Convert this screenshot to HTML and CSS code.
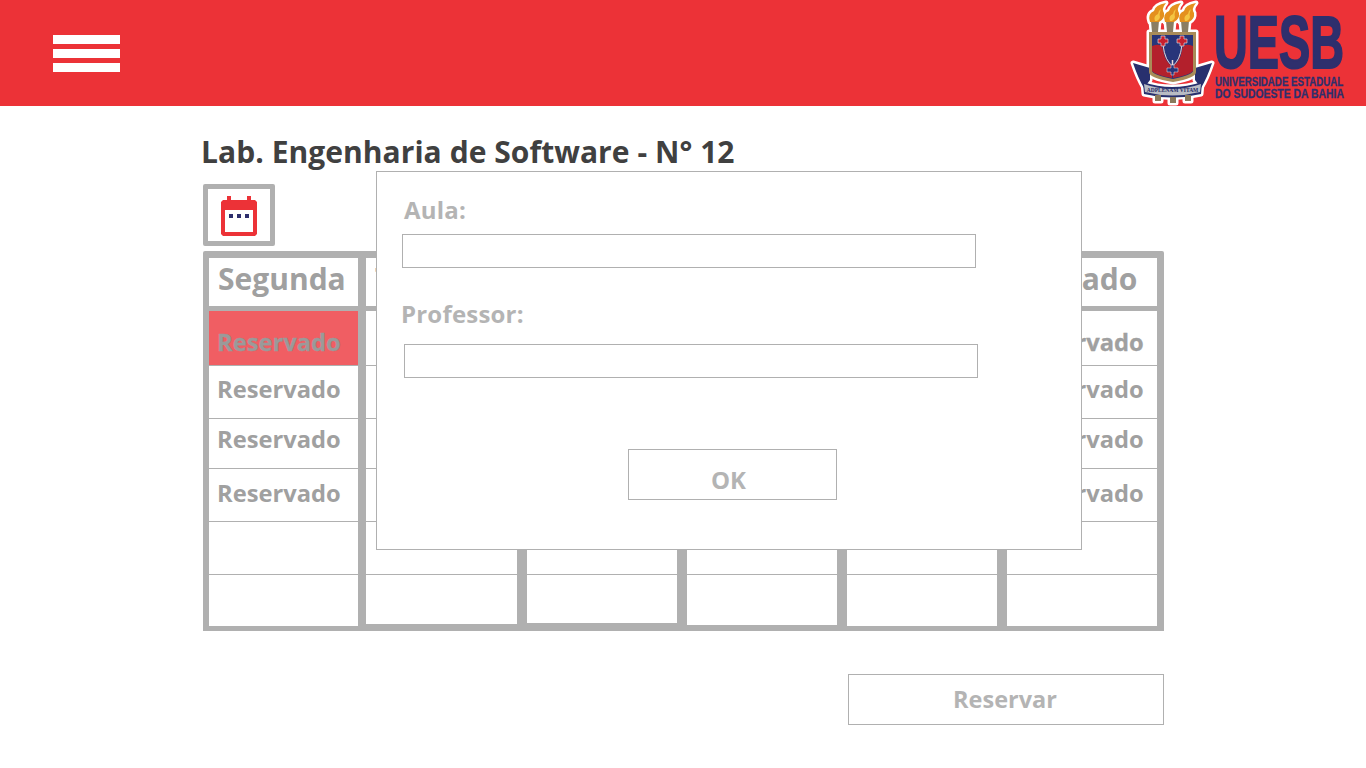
FILE: index.html
```html
<!DOCTYPE html>
<html lang="pt-BR">
<head>
<meta charset="utf-8">
<title>Lab. Engenharia de Software</title>
<link rel="stylesheet" href="styles.css">
</head>
<body>
  <header class="topbar">
    <button class="menu" aria-label="Menu"><span></span><span></span><span></span></button>
    <svg class="logo" viewBox="0 0 216 106" aria-label="UESB">
      <defs>
        <g id="crest">
          <path d="M3 63L20 68V80L14 88Q8 78 3 63ZM82 63L65 68V80L71 88Q77 78 82 63Z" fill="#28306e"/>
          <path d="M13 82Q42 92 72 82L71 94Q42 101 14 94Z" fill="#28306e"/>
          <path d="M25 95h6v6h-6zM40 97h6v6h-6zM55 95h6v6h-6z" fill="#8a7a5c"/>
          <path d="M19 32H66V72Q66 78 43 82Q19 78 19 72Z" fill="#a98c58"/>
          <path d="M21 21h8l-1 11h-6zM36 21h8l-1 11h-6zM51 21h8l-1 11h-6z" fill="#8b7d62"/>
          <path d="M20 22Q17 14 24 11Q25 5 36 3Q31 9 34 13Q35 19 29 22ZM35 22Q32 14 39 11Q40 5 51 3Q46 9 49 13Q50 19 44 22ZM50 22Q47 14 54 11Q55 5 66 3Q61 9 64 13Q65 19 59 22Z" fill="#e4901e"/>
        </g>
      </defs>
      <use href="#crest" stroke="#fff" stroke-width="5" stroke-linejoin="round"/>
      <use href="#crest"/>
      <path d="M25 21Q23 16 28 14Q28 11 31 9Q29 14 30 17Q30 19 27 21ZM40 21Q38 16 43 14Q43 11 46 9Q44 14 45 17Q45 19 42 21ZM55 21Q53 16 58 14Q58 11 61 9Q59 14 60 17Q60 19 57 21Z" fill="#f4c542"/>
      <path d="M22 35H63V71Q62 75 43 79Q23 75 22 71Z" fill="#27357a"/>
      <path d="M22 46Q32 42 33 50Q35 62 42 66V78Q25 75 22 71ZM63 46Q53 42 52 50Q50 62 43 66V78Q60 75 63 71Z" fill="#b3202c"/>
      <path d="M33 45Q35 61 42.500 66Q50 61 52 45" fill="none" stroke="#e9d9d9" stroke-width="1"/>
      <path d="M42.500 60V68" stroke="#e9d9d9" stroke-width="1.500"/>
      <path d="M28 39h3v-3h4v3h3v4h-3v3h-4v-3h-3zM47 39h3v-3h4v3h3v4h-3v3h-4v-3h-3z" fill="#c5202e" stroke="#eee" stroke-width=".6"/>
      <path d="M37 68h4v-3h3v3h4v4h-4v3h-3v-3h-4z" fill="#27357a" stroke="#eee" stroke-width=".5"/>
      <path d="M14 84Q42 94 71 84L70 92Q42 99 15 92Z" fill="#b9bcc4"/>
      <text class="logo-motto" transform="translate(42.500 92) scale(.92 1)" text-anchor="middle">ADPLENAM VITAM</text>
      <text class="logo-name" transform="translate(84 68) scale(.624 1)">UESB</text>
      <text class="logo-sub" transform="translate(85 86) scale(.81 1)">UNIVERSIDADE ESTADUAL</text>
      <text class="logo-sub" transform="translate(85 98) scale(.866 1)">DO SUDOESTE DA BAHIA</text>
    </svg>
  </header>

  <main class="page">
    <h1 class="title">Lab. Engenharia de Software - N° 12</h1>
    <button class="cal-btn" aria-label="Calendário">
      <svg width="36" height="40" viewBox="0 0 36 40">
        <path d="M6 0h4v4h16v-4h4v4h4l2 2v32l-2 2H2l-2-2V6l2-2h4z" fill="#ec3237"/>
        <rect x="4" y="14" width="28" height="22" fill="#fff"/>
        <path d="M8 18h4v4H8zM16 18h4v4h-4zM24 18h4v4h-4z" fill="#2e2f6d"/>
      </svg>
    </button>

    <div class="grade">
      <section class="dia dia-seg">
        <div class="dia-nome">Segunda</div>
        <div class="slot slot-ativo">Reservado</div>
        <div class="slot">Reservado</div>
        <div class="slot">Reservado</div>
        <div class="slot">Reservado</div>
        <div class="slot"></div>
        <div class="slot"></div>
      </section>
      <section class="dia dia-ter">
        <div class="dia-nome">Terça</div>
        <div class="slot"></div><div class="slot"></div><div class="slot"></div>
        <div class="slot"></div><div class="slot"></div><div class="slot"></div>
      </section>
      <section class="dia dia-qua">
        <div class="dia-nome">Quarta</div>
        <div class="slot"></div><div class="slot"></div><div class="slot"></div>
        <div class="slot"></div><div class="slot"></div><div class="slot"></div>
      </section>
      <section class="dia dia-qui">
        <div class="dia-nome">Quinta</div>
        <div class="slot"></div><div class="slot"></div><div class="slot"></div>
        <div class="slot"></div><div class="slot"></div><div class="slot"></div>
      </section>
      <section class="dia dia-sex">
        <div class="dia-nome">Sexta</div>
        <div class="slot"></div><div class="slot"></div><div class="slot"></div>
        <div class="slot"></div><div class="slot"></div><div class="slot"></div>
      </section>
      <section class="dia dia-sab">
        <div class="dia-nome">Sábado</div>
        <div class="slot slot-dobrado">Reservado</div>
        <div class="slot">Reservado</div>
        <div class="slot">Reservado</div>
        <div class="slot">Reservado</div>
        <div class="slot"></div>
        <div class="slot"></div>
      </section>
    </div>

    <div class="acoes">
      <button class="btn btn-reservar">Reservar</button>
    </div>
  </main>

  <form class="modal">
    <label class="campo-label label-aula" for="aula">Aula:</label>
    <input class="campo campo-aula" id="aula" type="text">
    <label class="campo-label label-prof" for="prof">Professor:</label>
    <input class="campo campo-prof" id="prof" type="text">
    <button class="btn btn-ok" type="button">OK</button>
  </form>
</body>
</html>
```

FILE: styles.css
```css
* {
  box-sizing: border-box;
}
body {
  margin: 0;
  background: #fff;
  font-family: "Open Sans", "Noto Sans", sans-serif;
  font-weight: 700;
}
button, input {
  font-family: inherit;
  font-weight: inherit;
}

.topbar {
  height: 106px;
  background: #ec3237;
  display: flex;
  align-items: flex-start;
  justify-content: space-between;
  padding-left: 53px;
  padding-right: 20px;
}
.menu {
  width: 67px;
  margin-top: 35px;
  padding: 0;
  border: 0;
  background: none;
  display: flex;
  flex-direction: column;
  gap: 5px;
}
.menu span {
  display: block;
  height: 9px;
  background: #fff;
}
.logo {
  width: 216px;
  height: 106px;
}
.logo-name {
  font-family: "Liberation Sans", sans-serif;
  font-size: 75px;
  font-weight: 700;
  fill: #2e2f6d;
  stroke: #2e2f6d;
  stroke-width: 2px;
}
.logo-sub {
  font-family: "Liberation Sans", sans-serif;
  font-size: 12px;
  font-weight: 700;
  fill: #2e2f6d;
  stroke: #2e2f6d;
  stroke-width: .3px;
}
.logo-motto {
  font-family: "Liberation Serif", serif;
  font-size: 6px;
  font-weight: 700;
  fill: #1f2a66;
}

.page {
  padding-left: 203px;
  width: 1164px;
}
.title {
  margin: 24px 0 0 -2px;
  height: 54px;
  font-size: 30px;
  line-height: 44px;
  letter-spacing: .05px;
  color: #404040;
  font-weight: 700;
}
.cal-btn {
  display: flex;
  align-items: flex-start;
  justify-content: center;
  width: 72px;
  height: 62px;
  padding: 7px 0 0;
  border: 5px solid #b0b0b0;
  border-radius: 2px;
  background: #fff;
}

.grade {
  margin-top: 5px;
  height: 380px;
  display: flex;
  background: #b0b0b0;
  padding: 7px 7px 0 6px;
  border-radius: 2px 2px 0 0;
}
.dia {
  width: 150px;
  margin-left: 10px;
  display: grid;
  grid-template-rows: 48px 60px 53px 50px 53px 53px 1fr;
}
.dia-seg { width: 149px; margin-left: 0; height: 368px; }
.dia-ter { width: 151px; margin-left: 8px; height: 366px; }
.dia-qua { height: 365px; }
.dia-qui { height: 367px; }
.dia-sex { height: 368px; }
.dia-sab { height: 368px; }

.dia-nome {
  background: #fff;
  padding-left: 9px;
  font-size: 30px;
  line-height: 42px;
  color: #a0a0a0;
}
.dia-sab .dia-nome {
  padding-left: 21px;
}
.slot {
  background: #fff;
  display: flex;
  align-items: center;
  padding-left: 8px;
  font-size: 23.700px;
  color: #a0a0a0;
  border-bottom: 1px solid #b0b0b0;
}
.slot:nth-child(2) {
  margin-top: 5px;
  padding-top: 7px;
}
.slot:nth-child(3) {
  padding-bottom: 7px;
}
.slot:nth-child(4) {
  padding-bottom: 10px;
}
.slot:nth-child(5) {
  padding-bottom: 5px;
}
.slot:last-child {
  border-bottom: 0;
}
.slot-ativo {
  background: #f05e63;
  color: #9a9a9a;
  -webkit-text-stroke: .3px #9a9a9a;
}
.slot-dobrado {
  -webkit-text-stroke: .3px #a0a0a0;
}
.dia-sab .slot {
  padding-left: 13px;
}

.acoes {
  display: flex;
  justify-content: flex-end;
  margin-top: 43px;
}
.btn {
  border: 1px solid #b0b0b0;
  background: #fff;
  color: #b4b4b4;
  font-size: 24px;
  padding: 0;
}
.btn-reservar {
  width: 316px;
  height: 51px;
  font-size: 23.500px;
  padding-bottom: 2px;
  padding-right: 2px;
}

.modal {
  position: absolute;
  left: 376px;
  top: 171px;
  width: 706px;
  height: 379px;
  background: #fff;
  border: 1px solid #b0b0b0;
  display: flex;
  flex-direction: column;
  align-items: flex-start;
}
.campo-label {
  font-size: 24px;
  line-height: 32px;
  letter-spacing: .2px;
  color: #b4b4b4;
}
.label-aula {
  margin: 22px 0 0 27px;
}
.label-prof {
  margin: 30px 0 0 24px;
}
.campo {
  width: 574px;
  height: 34px;
  border: 1px solid #b0b0b0;
  background: #fff;
}
.campo-aula {
  margin: 8px 0 0 25px;
}
.campo-prof {
  margin: 14px 0 0 27px;
}
.btn-ok {
  width: 209px;
  height: 51px;
  margin: 71px 0 0 251px;
  padding-top: 10px;
  padding-right: 8px;
}
```
